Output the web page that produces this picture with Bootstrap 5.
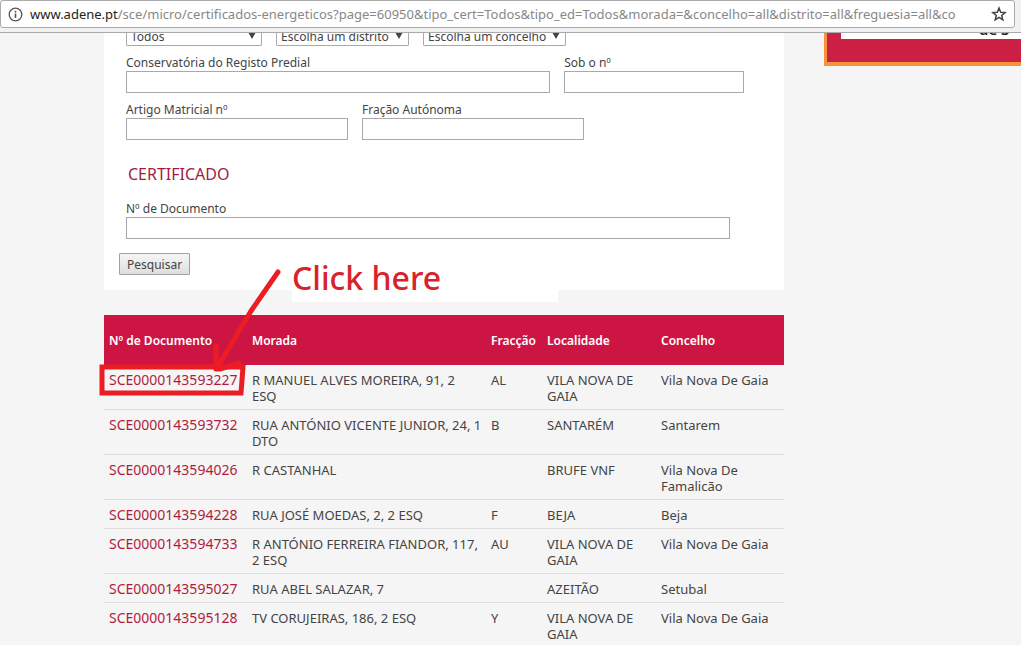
<!DOCTYPE html>
<html lang="pt">
<head>
  <meta charset="UTF-8"/>
  <meta name="viewport" content="width=device-width, initial-scale=1"/>
  <title>ADENE - Certificados Energéticos</title>
  <link href="https://cdn.jsdelivr.net/npm/bootstrap@5.3.0/dist/css/bootstrap.min.css" rel="stylesheet">
  <style>
    body {
      font-family: "Noto Sans", sans-serif;
      font-size: 12px;
      line-height: 16px;
      color: #444;
      background-color: #f5f5f5;
    }

    /* Browser bar */
    .browser-bar {
      height: 33px;
      padding: 0 6px 4px 0;
      background-color: #f1f1f1;
      border-bottom: 1px solid #aaa;
    }
    .omnibox {
      height: 28px;
      padding: 0 7px;
      background-color: #fff;
      border: 1px solid #aaa;
      border-radius: 3px;
    }
    .url {
      min-width: 0;
      margin-left: 7px;
      font-size: 13px;
      line-height: 20px;
      color: #888;
    }
    .url b { font-weight: 400; color: #222; }
    .star { padding: 0; border: 0; background: none; }

    /* Page */
    .page { gap: 40px; padding-left: 104px; }
    .search-form { background-color: #fff; padding-bottom: 15px; }
    .fields { padding: 0 22px; }
    .field-line { gap: 14px; margin-bottom: 9px; }
    .field-line.first { margin-top: -9px; }
    .field-line label { display: block; height: 16px; white-space: nowrap; }
    .field-line input {
      display: block;
      width: 100%;
      height: 22px;
      border: 1px solid #a9a9a9;
    }
    .field-line select {
      height: 22px;
      padding: 4px 4px 0;
      color: #444;
      border: 1px solid #a9a9a9;
      border-radius: 1px;
      appearance: none;
      background: #fff url("data:image/svg+xml,%3Csvg xmlns='http://www.w3.org/2000/svg' width='8' height='7'%3E%3Cpath d='M0 0h8L4 7z' fill='%23444'/%3E%3C/svg%3E") no-repeat right 5px center;
    }
    .w-registo { width: 66.7%; }
    .w-sob { width: 28.3%; }
    .w-artigo { width: 34.9%; }
    .w-doc { width: 95%; }
    .group-title {
      margin: 22px 2px 15px;
      font-size: 16px;
      line-height: 24px;
      font-weight: 400;
      color: #a01c40;
    }
    .btn-search {
      height: 22px;
      margin: 5px 15px 0;
      padding: 1px 7px 0;
      color: #444;
      border: 1px solid #a0a0a0;
      border-radius: 1px;
      background: linear-gradient(#f6f6f6, #dedede);
    }

    /* Results */
    .results {
      table-layout: fixed;
      margin-top: 25px;
      color: #444;
    }
    .results th {
      height: 50px;
      padding: 2px 5px 0;
      vertical-align: middle;
      font-weight: 600;
      color: #fff;
      background-color: #cc1543;
    }
    .results td {
      padding: 7px 3px 5px 5px;
      border-bottom: 1px solid #dcdcdc;
      font-size: 13px;
      vertical-align: top;
    }
    .results a {
      display: block;
      font-size: 14px;
      color: #b01c3c;
      text-decoration: none;
    }
    .c-doc { width: 143px; }
    .c-frac { width: 56px; }
    .c-loc { width: 114px; }
    .c-conc { width: 128px; }

    /* Side banner */
    .side { width: 197px; }
    .banner {
      display: flow-root;
      height: 33px;
      padding-left: 14px;
      background-color: #cc1f44;
      border: solid #f7923a;
      border-width: 0 0 4px 3px;
    }
    .banner-text {
      height: 18px;
      margin: -12px 0 0;
      padding-left: 138px;
      background-color: #fff;
      color: #222;
      font-size: 15px;
      font-weight: 600;
    }

    /* Hand-drawn note */
    .note {
      left: 188px;
      top: 225px;
      width: 266px;
      height: 44px;
      font-size: 32px;
      line-height: 40px;
      font-weight: 500;
      color: #d9222a;
      background-color: #fff;
    }
    .arrow { left: 0; top: 0; overflow: visible; pointer-events: none; }
  </style>
</head>
<body class="d-flex flex-column vh-100 overflow-hidden">

  <header class="browser-bar flex-shrink-0">
    <div class="omnibox d-flex align-items-center">
      <svg class="flex-shrink-0" width="15" height="15" viewBox="0 0 15 15" fill="none" stroke="#555">
        <circle cx="7.5" cy="7.5" r="6.3" stroke-width="1.3"/>
        <path d="M7.5 6.5v4.5M7.5 3.8v1.6" stroke-width="1.6"/>
      </svg>
      <div class="url flex-grow-1 overflow-hidden text-nowrap"><b>www.adene.pt</b>/sce/micro/certificados-energeticos?page=60950&amp;tipo_cert=Todos&amp;tipo_ed=Todos&amp;morada=&amp;concelho=all&amp;distrito=all&amp;freguesia=all&amp;co</div>
      <button type="button" class="star d-flex flex-shrink-0 ms-1" aria-label="Favoritos">
        <svg width="16" height="16" viewBox="0 0 16 16" fill="none" stroke="#444" stroke-width="1.5">
          <path d="M8 2l1.7 4.2 4.4.3-3.4 2.9 1.1 4.4L8 11.4l-3.8 2.4 1.1-4.4L1.9 6.5l4.4-.3z"/>
        </svg>
      </button>
    </div>
  </header>

  <div class="page d-flex flex-grow-1 overflow-hidden">
    <main class="position-relative flex-grow-1">
      <form class="search-form" onsubmit="return false">
        <div class="fields">
          <div class="field-line first d-flex">
            <select style="width:136px" aria-label="Tipo"><option>Todos</option></select>
            <select style="width:133px" aria-label="Distrito"><option>Escolha um distrito</option></select>
            <select style="width:143px" aria-label="Concelho"><option>Escolha um concelho</option></select>
          </div>
          <div class="field-line d-flex">
            <div class="w-registo"><label for="registo">Conservatória do Registo Predial</label><input type="text" id="registo"></div>
            <div class="w-sob"><label for="sob">Sob o nº</label><input type="text" id="sob"></div>
          </div>
          <div class="field-line d-flex">
            <div class="w-artigo"><label for="artigo">Artigo Matricial nº</label><input type="text" id="artigo"></div>
            <div class="w-artigo"><label for="fracao">Fração Autónoma</label><input type="text" id="fracao"></div>
          </div>
          <h2 class="group-title">CERTIFICADO</h2>
          <div class="field-line d-flex">
            <div class="w-doc"><label for="documento">Nº de Documento</label><input type="text" id="documento"></div>
          </div>
        </div>
        <button type="submit" class="btn-search">Pesquisar</button>
      </form>

      <table class="results w-100">
        <colgroup><col class="c-doc"><col><col class="c-frac"><col class="c-loc"><col class="c-conc"></colgroup>
        <thead>
          <tr><th>Nº de Documento</th><th>Morada</th><th>Fracção</th><th>Localidade</th><th>Concelho</th></tr>
        </thead>
        <tbody>
          <tr><td><a href="#">SCE0000143593227</a></td><td>R MANUEL ALVES MOREIRA, 91, 2<br>ESQ</td><td>AL</td><td>VILA NOVA DE GAIA</td><td>Vila Nova De Gaia</td></tr>
          <tr><td><a href="#">SCE0000143593732</a></td><td>RUA ANTÓNIO VICENTE JUNIOR, 24, 1 DTO</td><td>B</td><td>SANTARÉM</td><td>Santarem</td></tr>
          <tr><td><a href="#">SCE0000143594026</a></td><td>R CASTANHAL</td><td></td><td>BRUFE VNF</td><td>Vila Nova De Famalicão</td></tr>
          <tr><td><a href="#">SCE0000143594228</a></td><td>RUA JOSÉ MOEDAS, 2, 2 ESQ</td><td>F</td><td>BEJA</td><td>Beja</td></tr>
          <tr><td><a href="#">SCE0000143594733</a></td><td>R ANTÓNIO FERREIRA FIANDOR, 117, 2 ESQ</td><td>AU</td><td>VILA NOVA DE GAIA</td><td>Vila Nova De Gaia</td></tr>
          <tr><td><a href="#">SCE0000143595027</a></td><td>RUA ABEL SALAZAR, 7</td><td></td><td>AZEITÃO</td><td>Setubal</td></tr>
          <tr><td><a href="#">SCE0000143595128</a></td><td>TV CORUJEIRAS, 186, 2 ESQ</td><td>Y</td><td>VILA NOVA DE GAIA</td><td>Vila Nova De Gaia</td></tr>
        </tbody>
      </table>

      <div class="note position-absolute">Click here</div>
      <svg class="arrow position-absolute" width="180" height="370" viewBox="0 0 180 370" fill="none" stroke="#ec1c24" stroke-width="5" stroke-linecap="round" stroke-linejoin="round">
        <path d="M174 239L147 278L113 335M112 313v23h4L135 330"/>
        <path stroke-linejoin="miter" d="M-2 334H139L137 360H-2z"/>
      </svg>
    </main>

    <aside class="side flex-shrink-0">
      <div class="banner"><p class="banner-text">de S</p></div>
    </aside>
  </div>

  <script src="https://cdn.jsdelivr.net/npm/bootstrap@5.3.0/dist/js/bootstrap.bundle.min.js"></script>
</body>
</html>
